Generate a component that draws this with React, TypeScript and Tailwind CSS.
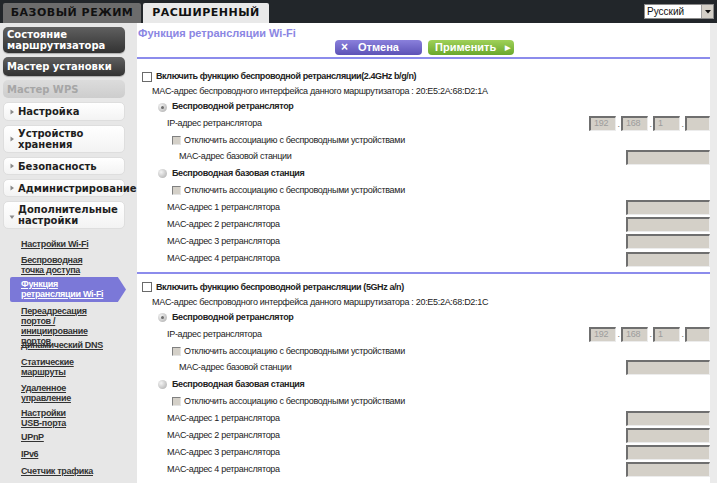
import React from "react";

const LS = "font-['Liberation_Sans',Arial,sans-serif]";
const DJ = "font-['DejaVu_Sans',Verdana,sans-serif]";

function Tri({ down }: { down?: boolean }) {
  return down ? (
    <svg width="6" height="6" viewBox="0 0 6 6" className="shrink-0 mr-[3px] mt-[4px]">
      <path d="M0.5 1.5 L5.5 1.5 L3 5 Z" fill="#8a8a8a" />
    </svg>
  ) : (
    <svg width="6" height="6" viewBox="0 0 6 6" className="shrink-0 mr-[3px]">
      <path d="M1.5 0.5 L5 3 L1.5 5.5 Z" fill="#8a8a8a" />
    </svg>
  );
}

function DarkBtn({ children, h }: { children: React.ReactNode; h: string }) {
  return (
    <div
      className={`${h} w-[122px] rounded-[5px] bg-linear-to-b from-[#606060] to-[#333333] text-white font-bold text-[10px] leading-[11px] pl-[4px] flex items-center shadow-[0_1px_1px_rgba(0,0,0,0.25)]`}
    >
      <div>{children}</div>
    </div>
  );
}

function LightBtn({ children, h, down }: { children: React.ReactNode; h: string; down?: boolean }) {
  return (
    <div
      className={`${h} w-[122px] rounded-[5px] bg-linear-to-b from-white to-[#f3f3f3] border border-[#dedede] text-[#1e1e1e] font-bold text-[10px] leading-[11px] pl-[5px] flex items-center whitespace-nowrap`}
    >
      <Tri down={down} />
      <div>{children}</div>
    </div>
  );
}

function SubLink({ children, mt, h }: { children: React.ReactNode; mt: string; h?: string }) {
  return (
    <div className={`${mt} ${h ?? ""} pl-[21px] text-[9px] leading-[10px] font-bold tracking-[-0.3px] text-[#333] underline`}>
      {children}
    </div>
  );
}

function Sidebar() {
  return (
    <div className={`w-[137px] shrink-0 bg-[#e7e7e7] pl-[3px] pt-[4px] flex flex-col gap-[4px] ${DJ}`}>
      <DarkBtn h="h-[26px]">
        Состояние
        <br />
        маршрутизатора
      </DarkBtn>
      <DarkBtn h="h-[19px]">Мастер установки</DarkBtn>
      <div className="h-[18px] w-[122px] rounded-[5px] bg-linear-to-b from-[#dcdcdc] to-[#cdcdcd] text-[#a6a6a6] font-bold text-[10px] pl-[4px] flex items-center">
        Мастер WPS
      </div>
      <LightBtn h="h-[19px]">Настройка</LightBtn>
      <LightBtn h="h-[28px]">
        Устройство
        <br />
        хранения
      </LightBtn>
      <LightBtn h="h-[18px]">Безопасность</LightBtn>
      <LightBtn h="h-[18px]">Администрирование</LightBtn>
      <LightBtn h="h-[28px]" down>
        Дополнительные
        <br />
        настройки
      </LightBtn>
      <div className={`flex flex-col -ml-[3px] ${LS}`}>
        <SubLink mt="mt-[6px]">Настройки Wi-Fi</SubLink>
        <SubLink mt="mt-[6px]">
          Беспроводная
          <br />
          точка доступа
        </SubLink>
        <div className="mt-[2px] ml-[10px] h-[25px] w-[116px] bg-[#7b78d8] [clip-path:polygon(0_0,93%_0,100%_50%,93%_100%,0_100%)] rounded-l-[2px] pl-[11px] pt-[2px] text-[9px] leading-[10px] font-bold tracking-[-0.3px] text-white underline">
          Функция
          <br />
          ретрансляции Wi-Fi
        </div>
        <SubLink mt="mt-[4px]" h="h-[34px]">
          Переадресация
          <br />
          портов /
          <br />
          инициирование
          <br />
          портов
        </SubLink>
        <SubLink mt="mt-0">Динамический DNS</SubLink>
        <SubLink mt="mt-[7px]">
          Статические
          <br />
          маршруты
        </SubLink>
        <SubLink mt="mt-[6px]">
          Удаленное
          <br />
          управление
        </SubLink>
        <SubLink mt="mt-[5px]">
          Настройки
          <br />
          USB-порта
        </SubLink>
        <SubLink mt="mt-[4px]">UPnP</SubLink>
        <SubLink mt="mt-[7px]">IPv6</SubLink>
        <SubLink mt="mt-[7px]">Счетчик трафика</SubLink>
      </div>
    </div>
  );
}

function Check() {
  return <div className="w-[10px] h-[10px] shrink-0 bg-white border border-[#6a6a6a]" />;
}

function SubCheck() {
  return <div className="w-[9px] h-[9px] shrink-0 bg-[#d4d0c8] border-t border-l border-[#808080] border-r border-b border-r-[#e4e4e4] border-b-[#e4e4e4]" />;
}

function Radio({ checked }: { checked?: boolean }) {
  return (
    <div className="w-[9px] h-[9px] shrink-0 rounded-full bg-radial-[at_35%_35%] from-[#f4f4f4] to-[#a9a9a9] flex items-center justify-center">
      {checked && <div className="w-[3px] h-[3px] rounded-full bg-[#6d6d6d]" />}
    </div>
  );
}

function Box({ w, v }: { w: string; v?: string }) {
  return (
    <div
      className={`${w} h-[15px] shrink-0 bg-[#d4d0c8] border-l-2 border-t-2 border-l-[#6f6f6f] border-t-[#6f6f6f] border-r border-b border-r-[#ececec] border-b-[#ececec] text-[9px] leading-[11px] text-[#9c9c9c] pl-[3px]`}
    >
      {v}
    </div>
  );
}

function Dot() {
  return <div className="w-[5px] text-[9px] text-[#666] text-center leading-[15px] pt-[1px]">.</div>;
}

function IP() {
  return (
    <div className="flex items-center">
      <Box w="w-[27px]" v="192" />
      <Dot />
      <Box w="w-[27px]" v="168" />
      <Dot />
      <Box w="w-[27px]" v="1" />
      <Dot />
      <Box w="w-[25px]" />
    </div>
  );
}

function Section({ pt, band, mac }: { pt: string; band: string; mac: string }) {
  const macRows = ["MAC-адрес 1 ретранслятора", "MAC-адрес 2 ретранслятора", "MAC-адрес 3 ретранслятора"];
  return (
    <div className={`${pt} pb-[4px]`}>
      <div className="h-[15px] flex items-center pl-[5px]">
        <Check />
        <span className="ml-[4px] font-bold tracking-[-0.4px]">Включить функцию беспроводной ретрансляции{band}</span>
      </div>
      <div className="h-[15px] flex items-center pl-[15px]">
        MAC-адрес беспроводного интерфейса данного маршрутизатора : {mac}
      </div>
      <div className="h-[16px] flex items-center pl-[21px]">
        <Radio checked />
        <span className="ml-[5px] font-bold tracking-[-0.35px]">Беспроводной ретранслятор</span>
      </div>
      <div className="h-[17px] flex items-center pl-[30px]">
        <span className="flex-1">IP-адрес ретранслятора</span>
        <IP />
      </div>
      <div className="h-[17px] flex items-center pl-[35px]">
        <SubCheck />
        <span className="ml-[3px]">Отключить ассоциацию с беспроводными устройствами</span>
      </div>
      <div className="h-[16px] flex items-center pl-[42px]">
        <span className="flex-1">MAC-адрес базовой станции</span>
        <Box w="w-[84px]" />
      </div>
      <div className="h-[17px] flex items-center pl-[21px]">
        <Radio />
        <span className="ml-[5px] font-bold tracking-[-0.35px]">Беспроводная базовая станция</span>
      </div>
      <div className="h-[17px] flex items-center pl-[35px]">
        <SubCheck />
        <span className="ml-[3px]">Отключить ассоциацию с беспроводными устройствами</span>
      </div>
      {macRows.map((t) => (
        <div key={t} className="h-[17px] flex items-center pl-[30px]">
          <span className="flex-1">{t}</span>
          <Box w="w-[84px]" />
        </div>
      ))}
      <div className="h-[18px] flex items-center pl-[30px]">
        <span className="flex-1">MAC-адрес 4 ретранслятора</span>
        <Box w="w-[84px]" />
      </div>
    </div>
  );
}

function Content() {
  return (
    <div className={`w-[573px] shrink-0 bg-white flex flex-col overflow-hidden ${LS} text-[9px] tracking-[-0.3px] text-[#222]`}>
      <div className="h-[18px] pl-[1px] pt-[3px] text-[11px] leading-[14px] tracking-normal font-bold text-[#8b86e3]">Функция ретрансляции Wi-Fi</div>
      <div className="h-[15px] flex justify-center gap-[6px] pl-[2px] tracking-normal">
        <div className="w-[87px] h-[15px] rounded-[4px] bg-linear-to-b from-[#8a80dc] to-[#5d52b6] text-white text-[11px] leading-[15px] font-bold flex items-center">
          <span className="ml-[6px] w-[8px] text-[12px]">×</span>
          <span className="ml-[9px]">Отмена</span>
        </div>
        <div className="w-[86px] h-[15px] rounded-[4px] bg-linear-to-b from-[#9fd158] to-[#6aa82c] text-white text-[11px] leading-[15px] font-bold flex items-center">
          <span className="ml-[7px]">Применить</span>
          <span className="ml-[9px] text-[7px]">▶</span>
        </div>
      </div>
      <div className="mt-[2px] h-[2px] bg-[#8c8cec]" />
      <Section pt="pt-[10px]" band="(2.4GHz b/g/n)" mac="20:E5:2A:68:D2:1A" />
      <div className="h-[2px] bg-[#8c8cec]" />
      <Section pt="pt-[6px]" band=" (5GHz a/n)" mac="20:E5:2A:68:D2:1C" />
    </div>
  );
}

function TopBar() {
  return (
    <div className={`h-[23px] bg-[#22262a] flex items-end pl-[3px] relative ${DJ}`}>
      <div className="w-[138px] h-[20px] bg-[#6c6c6c] rounded-t-[2px] flex items-center justify-center text-[11px] font-bold tracking-[0.5px] text-[#111]">
        БАЗОВЫЙ РЕЖИМ
      </div>
      <div className="ml-[2px] w-[126px] h-[20px] bg-[#e9e9e9] rounded-t-[2px] flex items-center justify-center text-[11px] font-bold tracking-[0.5px] text-[#111]">
        РАСШИРЕННЫЙ
      </div>
      <div className={`absolute left-[644px] top-[4px] w-[70px] h-[15px] bg-white border border-[#8a8a8a] flex items-center ${LS}`}>
        <span className="flex-1 pl-[2px] text-[10px] text-[#111] leading-[13px]">Русский</span>
        <div className="w-[12px] h-[13px] bg-[#d4d0c8] border-l border-[#a0a0a0] flex items-center justify-center">
          <svg width="6" height="4" viewBox="0 0 6 4">
            <path d="M0 0 L6 0 L3 3.5 Z" fill="#111" />
          </svg>
        </div>
      </div>
    </div>
  );
}

export default function App() {
  return (
    <div className="w-[717px] h-[483px] overflow-hidden bg-white flex flex-col">
      <TopBar />
      <div className="flex flex-1 min-h-0">
        <Sidebar />
        <Content />
        <div className="w-[7px] bg-[#ebebeb]" />
      </div>
    </div>
  );
}
